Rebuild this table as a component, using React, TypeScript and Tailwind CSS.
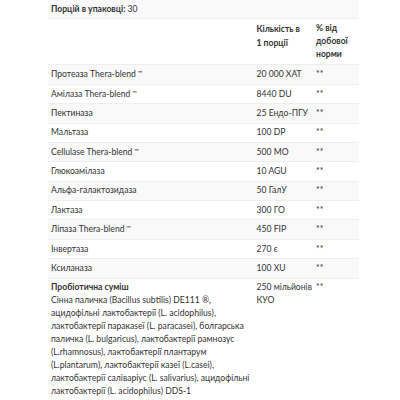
const rows: [string, string, boolean][] = [
  ["Протеаза Thera-blend", "20 000 ХАТ", true],
  ["Амілаза Thera-blend", "8440 DU", true],
  ["Пектиназа", "25 Ендо-ПГУ", false],
  ["Мальтаза", "100 DP", false],
  ["Cellulase Thera-blend", "500 МО", true],
  ["Глюкоамілаза", "10 AGU", false],
  ["Альфа-галактозидаза", "50 ГалУ", false],
  ["Лактаза", "300 ГО", false],
  ["Ліпаза Thera-blend", "450 FIP", true],
  ["Інвертаза", "270 є", false],
  ["Ксиланаза", "100 XU", false],
];

const cell = "px-[3px] py-[2.7px] align-top";

function Tm() {
  return <span className="relative -top-[2px] text-[6px]"> ™</span>;
}

export default function App() {
  return (
    <div className="w-[400px] h-[400px] overflow-hidden bg-white font-['Lato',sans-serif] text-[8.6px] leading-[13px] text-[#333]">
      <table className="ml-[48px] -mt-[2px] w-[311px] table-fixed border-collapse">
        <colgroup>
          <col className="w-[205.5px]" />
          <col className="w-[59.5px]" />
          <col className="w-[46px]" />
        </colgroup>
        <tbody>
          <tr className="bg-[#f9f9f9]">
            <td colSpan={3} className={`${cell} pt-[4.5px]`}>
              <span className="font-bold">Порцій в упаковці:</span> 30
            </td>
          </tr>
          <tr className="border-t-[1.5px] border-[#eeeeee]">
            <td className={cell}></td>
            <td className={`${cell} font-bold leading-[14px] whitespace-nowrap`}>
              Кількість в<br />1 порції
            </td>
            <td className={`${cell} font-bold leading-[13.3px]`}>% від добової норми</td>
          </tr>
          {rows.map(([name, amount, tm], i) => (
            <tr
              key={name}
              className={`border-t-[1.5px] border-[#eeeeee] ${i % 2 === 0 ? "bg-[#f9f9f9]" : "bg-white"}`}
            >
              <td className={cell}>
                {name}
                {tm && <Tm />}
              </td>
              <td className={`${cell} whitespace-nowrap`}>{amount}</td>
              <td className={cell}>**</td>
            </tr>
          ))}
          <tr className="border-t-[1.5px] border-[#eeeeee]">
            <td className="pl-[3px] pr-[1px] py-[2.7px] align-top">
              <span className="font-bold">Пробіотична суміш</span>
              <br />
              Сінна паличка (Bacillus subtilis) DE111 ®, ацидофільні лактобактерії (L. acidophilus),
              лактобактерії паракаѕеї (L. paracasei), болгарська паличка (L. bulgaricus), лактобактерії
              рамнозус (L.rhamnosus), лактобактерії плантарум (L.plantarum), лактобактерії казеї (L.casei),
              лактобактерії саліваріус (L. salivarius), ацидофільні лактобактерії (L. acidophilus) DDS-1
            </td>
            <td className={`${cell} whitespace-nowrap`}>
              250 мільйонів
              <br />
              КУО
            </td>
            <td className={cell}>**</td>
          </tr>
          <tr className="border-t-[1.5px] border-[#eeeeee] bg-[#f9f9f9]">
            <td className={cell}>&nbsp;</td>
            <td className={cell}></td>
            <td className={cell}></td>
          </tr>
        </tbody>
      </table>
    </div>
  );
}
